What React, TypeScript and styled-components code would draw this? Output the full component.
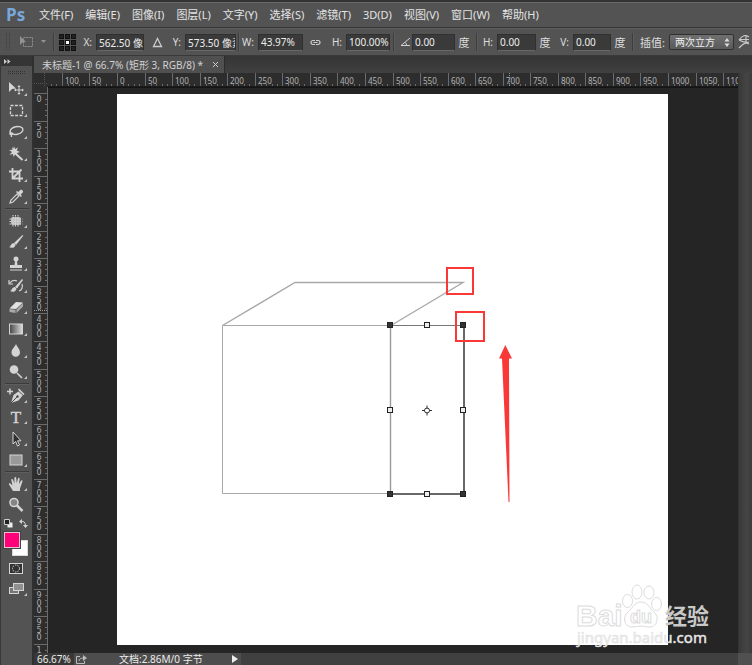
import React from "react";
import styled, { createGlobalStyle } from "styled-components";

const UI_FONT = '"Noto Sans", "Noto Sans CJK SC", sans-serif';

const GlobalStyle = createGlobalStyle`
  * { box-sizing: border-box; }
  body {
    margin: 0;
    background: #252525;
    font-family: ${UI_FONT};
    font-size: 10px;
    color: #dedede;
  }
  button, input, select { font: inherit; color: inherit; margin: 0; padding: 0; border: 0; background: none; }
`;

const Shell = styled.div`
  position: relative;
  display: flex;
  flex-direction: column;
  height: 100vh;
  overflow: hidden;
`;

const MenuBar = styled.nav`
  display: flex;
  flex: none;
  align-items: center;
  height: 28px;
  border-top: 2px solid #333;
  border-bottom: 1px solid #353535;
  box-shadow: inset 0 1px #686868;
  background: #535353;
`;

const Logo = styled.span`
  width: 33px;
  padding-left: 6px;
  font: bold 17px/24px "Open Sans", sans-serif;
  color: #78a7dc;
`;

const MenuItem = styled.button`
  flex: none;
  padding: 0 6px;
  font-size: 11px;
  line-height: 24px;
  white-space: nowrap;
  color: #e4e4e4;
`;

const OptionsBar = styled.form`
  display: grid;
  flex: none;
  grid-template-columns:
    16px 34px 8px 18px 20px 48px 26px 15px 51px 6px 16px 45px 25px 18px 44px 8px 14px
    43px 18px 8px 16px 39px 18px 19px 38px 18px 8px 32px 65px minmax(19px, 1fr);
  align-items: center;
  height: 28px;
  border-top: 1px solid #5f5f5f;
  border-bottom: 1px solid #393939;
  background: #535353;
  overflow: hidden;
`;

const FieldLabel = styled.label<{ $large?: boolean }>`
  padding-right: 4px;
  font-size: ${(p) => (p.$large ? 11 : 10)}px;
  text-align: right;
  white-space: nowrap;
`;

const Unit = styled.span`
  text-align: center;
  font-size: 11px;
`;

const NumberBox = styled.input`
  width: 100%;
  height: 17px;
  padding-left: 2px !important;
  border: 1px solid #303030 !important;
  border-bottom-color: #676767 !important;
  background: #3a3a3a !important;
  color: #ececec;
`;

const Divider = styled.i`
  justify-self: center;
  width: 2px;
  height: 18px;
  border-left: 1px solid #3d3d3d;
  border-right: 1px solid #5c5c5c;
`;

const IconCell = styled.span`
  display: flex;
  align-items: center;
  justify-content: center;
  gap: 6px;
`;

const SelectWrap = styled.span`
  display: flex;
  align-items: center;
  height: 16px;
  border: 1px solid #303030;
  border-radius: 2px;
  background: linear-gradient(#707070, #5b5b5b);
  padding-right: 3px;
`;

const MethodSelect = styled.select`
  flex: 1;
  min-width: 0;
  appearance: none;
  padding-left: 5px;
  line-height: 14px;
  color: #f0f0f0;
  option { color: #222; }
`;

const Body = styled.div`
  display: flex;
  flex: 1;
  min-height: 0;
  background: #303030;
`;

const ToolPanel = styled.aside`
  display: flex;
  flex-direction: column;
  flex: none;
  width: 32px;
  margin-right: 2px;
  border-left: 1px solid #383838;
  background: #535353;
`;

const PanelHead = styled.button`
  display: flex;
  align-items: center;
  height: 10px;
  padding-left: 3px;
  background: #353535;
`;

const GripRow = styled.div`
  display: flex;
  justify-content: center;
  align-items: center;
  height: 12px;
`;

const ToolGroup = styled.div<{ $height: number }>`
  display: grid;
  grid-auto-rows: 1fr;
  flex: none;
  height: ${(p) => p.$height}px;
`;

const ToolRule = styled.hr`
  width: 24px;
  height: 2px;
  margin: 0 auto;
  border: 0;
  border-top: 1px solid #3b3b3b;
  border-bottom: 1px solid #5e5e5e;
`;

const ToolButton = styled.button`
  display: flex;
  align-items: center;
  justify-content: center;
  width: 30px;
`;

const ColorSection = styled.div`
  display: flex;
  flex-direction: column;
  padding-left: 3px;
  height: 41px;
`;

const MiniRow = styled.div`
  display: flex;
  justify-content: space-between;
  width: 24px;
  height: 14px;
  margin-bottom: 2px;
`;

const MiniButton = styled.button`
  display: flex;
  align-items: center;
`;

const Swatches = styled.div`
  display: grid;
  grid-template-columns: 8px 8px 8px;
  grid-template-rows: 8px 8px 8px;
`;

const Swatch = styled.button<{ $color: string; $front?: boolean }>`
  grid-area: ${(p) => (p.$front ? "1 / 1 / 3 / 3" : "2 / 2 / 4 / 4")};
  z-index: ${(p) => (p.$front ? 1 : 0)};
  border: 1px solid ${(p) => (p.$front ? "#e6c5d2" : "#d8d8d8")} !important;
  outline: ${(p) => (p.$front ? "1px solid #444" : "none")};
  background: ${(p) => p.$color} !important;
`;

const DocumentPane = styled.main`
  display: flex;
  flex: 1;
  flex-direction: column;
  min-width: 0;
`;

const TabStrip = styled.div`
  display: flex;
  flex: none;
  height: 17px;
  background: linear-gradient(#353535, #404040);
`;

const DocumentTab = styled.div`
  display: flex;
  align-items: center;
  gap: 10px;
  padding: 0 6px 0 8px;
  border-right: 1px solid #2c2c2c;
  background: #505050;
  line-height: 16px;
  color: #d0d0d0;
  white-space: nowrap;
`;

const CloseButton = styled.button`
  display: flex;
`;

const DocumentGrid = styled.div`
  display: grid;
  flex: 1;
  min-height: 0;
  grid-template-columns: 14px minmax(0, 1fr) 14px;
  grid-template-rows: 14px minmax(0, 1fr);
`;

const RulerCell = styled.div`
  overflow: hidden;
  background: #2d2d2d;
  svg { display: block; }
`;

const CanvasArea = styled.div`
  overflow: hidden;
  padding: 6px 0 0 69px;
  background: #252525;
  border-top: 1px solid #151515;
  svg { display: block; }
`;

const VerticalScroll = styled.div`
  grid-row: 1 / 3;
  grid-column: 3;
  border-left: 1px solid #333;
  background: linear-gradient(90deg, #393939, #454545 60%, #3b3b3b);
`;

const StatusBar = styled.footer`
  display: flex;
  flex: none;
  height: 12px;
  line-height: 12px;
  background: #404040;
  color: #ececec;
`;

const Zoom = styled.input`
  width: 40px;
  padding-left: 3px !important;
  background: #383838 !important;
`;

const StatusInfo = styled.div`
  display: flex;
  align-items: center;
  width: 167px;
  padding: 0 3px 0 2px;
  background: #4d4d4d;
  white-space: nowrap;
`;

const StatusText = styled.span`
  flex: 1;
  padding-left: 32px;
`;

const ScrollCorner = styled.i`
  width: 14px;
  margin-left: auto;
  background: #505050;
`;

const Watermark = styled.svg`
  position: absolute;
  right: 36px;
  bottom: 13px;
  pointer-events: none;
`;

const menus = [
  "文件(F)", "编辑(E)", "图像(I)", "图层(L)", "文字(Y)", "选择(S)",
  "滤镜(T)", "3D(D)", "视图(V)", "窗口(W)", "帮助(H)",
];

const LIGHT = "#d4d4d4";

const line = { fill: "none", stroke: LIGHT, strokeWidth: 1.4 };

const drawings: Record<string, React.ReactNode> = {
  move: (
    <>
      <path d="M2 2v10l3-3 4-.5z" fill={LIGHT} />
      <path d="M12 6v8M8 10h8" stroke={LIGHT} />
      <path d="M12 5l-1.500 2h3zM12 15l-1.500-2h3zM7 10l2-1.500v3zM17 10l-2-1.500v3z" fill={LIGHT} />
    </>
  ),
  marquee: <rect x="3.500" y="4.500" width="12" height="10" {...line} strokeWidth={1.3} strokeDasharray="3 1.400" />,
  lasso: (
    <>
      <ellipse cx="9.500" cy="7.500" rx="6.500" ry="3.800" transform="rotate(-12 9.500 7.500)" {...line} />
      <path d="M4 9c-2 1-1 3 .5 2.500S6 10 5 10s-.5 3-.5 4" {...line} />
    </>
  ),
  wand: (
    <>
      <path d="M7 1l1 3 3-1.500L9.800 5.500 13 7l-3 1 .8 3L8 9.500 6.500 12 6 9l-3.500.8L5 7 2 5l3.500-.3L5 2l1.500 1.500z" fill={LIGHT} />
      <path d="M9 9l6.500 6" stroke={LIGHT} strokeWidth="2" />
    </>
  ),
  crop: <path d="M5.500 2v10.500H16M2 5.500h10.500V16M5.500 12.500l9-9" {...line} strokeWidth={1.8} />,
  dropper: (
    <>
      <path d="M3 15l1-3 6-6 2 2-6 6z" {...line} strokeWidth={1.2} />
      <path d="M9 4l5 5 .8-1-1-1.500 2-2c1-1.500-1-3.500-2.500-2.500l-2 2L10 3z" fill={LIGHT} />
    </>
  ),
  heal: (
    <>
      <rect x="4" y="5" width="10" height="8" rx="2" fill="#bebebe" />
      <path d="M6 3v12M8.500 3v12M11 3v12M2.500 7h13M2.500 9.500h13M2.500 12h13" stroke={LIGHT} strokeDasharray="1.500 1" />
    </>
  ),
  brush: (
    <>
      <path d="M7 10L15.500 2l.8.8L9 12z" fill={LIGHT} />
      <path d="M2 14c2 0 1.500-4 5-4l1.500 2C8 15 4 15.500 2 14z" fill={LIGHT} />
    </>
  ),
  stamp: (
    <>
      <circle cx="9" cy="4" r="2.500" fill={LIGHT} />
      <path d="M8 6h2l.5 4H15v3H3v-3h4.500z" fill={LIGHT} />
      <path d="M3 15h12" stroke={LIGHT} />
    </>
  ),
  history: (
    <>
      <path d="M8 10l7-8 1 1-6 8.500z" fill={LIGHT} />
      <path d="M3 14c2 0 1.500-4 5-4l1.500 2C8.500 15 5 15.500 3 14z" fill={LIGHT} />
      <path d="M3 6c2-3 5-3 7-2M2 3v4h4M15 7c1 3 0 6-3 7" {...line} strokeWidth={1.2} />
    </>
  ),
  eraser: (
    <>
      <path d="M2.500 10.500L9 4l7 .5-7 6.500z" fill="#e2e2e2" />
      <path d="M2.500 11l6 .7V15l-6-1zM9.500 11.500L16 5v3.500L9.500 15z" fill="#a9a9a9" />
    </>
  ),
  gradient: <rect x="2.500" y="4" width="13" height="10" fill="url(#ramp)" stroke={LIGHT} />,
  drop: <path d="M9 2c1 3 4 5 4 8.500a4.200 4.200 0 0 1-8.500 0C4.500 7 8 5 9 2z" fill={LIGHT} />,
  dodge: (
    <>
      <circle cx="7" cy="6.500" r="4.300" fill={LIGHT} />
      <path d="M10 10l5 5" stroke={LIGHT} strokeWidth="1.600" />
    </>
  ),
  pen: (
    <>
      <path d="M0 4.500h6M3 1.500v6" stroke={LIGHT} strokeWidth="1.500" />
      <path d="M4 16l2.500-8L12 4l4 4-4.500 5.500z" fill={LIGHT} />
      <path d="M4 16l6-6M11 3.500l6 5.500" stroke="#484848" />
      <path d="M12 1.500L17.500 7l-1 1.200-5.500-5.500z" fill={LIGHT} />
      <circle cx="10.500" cy="9.500" r="1.200" fill="#484848" />
    </>
  ),
  pointer: <path d="M6 2v12l2.700-2.500L10.500 16l2-1-2-4.200H14z" fill="#2f2f2f" stroke={LIGHT} />,
  shape: <rect x="3" y="4" width="12" height="10" fill="#999" stroke={LIGHT} />,
  hand: (
    <path
      d="M6 16L2 9.500c-.5-1 .8-1.600 1.600-.8L5.500 10.500 4.300 5c-.1-1.200 1.300-1.400 1.700-.3L7.500 8.500 7.400 3c0-1.200 1.700-1.200 1.800 0l.5 5.300L11 3.500c.3-1.100 1.700-.8 1.600.4L12 9l2-3.200c.6-1 1.800-.3 1.400.8L13 13.500V16z"
      fill={LIGHT}
    />
  ),
  zoom: (
    <>
      <circle cx="7" cy="6.500" r="4" fill="#858585" stroke={LIGHT} strokeWidth="1.600" />
      <path d="M10 9.500l5.500 5.500" stroke={LIGHT} strokeWidth="2.500" />
    </>
  ),
  mask: (
    <>
      <rect x="2.500" y="4.500" width="13" height="10" fill="#333" stroke={LIGHT} />
      <circle cx="9" cy="9.500" r="3.500" {...line} strokeWidth={1} strokeDasharray="1.500 1" />
    </>
  ),
  screen: (
    <>
      <rect x="2.500" y="7.500" width="9" height="6" fill="#777" stroke={LIGHT} />
      <rect x="6.500" y="3.500" width="10" height="7" fill="#909090" stroke={LIGHT} />
    </>
  ),
};

function ToolIcon({ name, flyout }: { name: string; flyout: boolean }) {
  return (
    <svg width="24" height="18" viewBox="-3 0 24 18" aria-hidden="true">
      <defs>
        <linearGradient id="ramp">
          <stop stopColor="#444" />
          <stop offset="1" stopColor="#ddd" />
        </linearGradient>
      </defs>
      {name === "type" ? (
        <text x="9" y="15" textAnchor="middle" fontFamily="Liberation Serif, serif" fontSize="17" fill={LIGHT} stroke={LIGHT} strokeWidth="0.400">T</text>
      ) : (
        drawings[name]
      )}
      {flyout && <path d="M20 13v3h-3z" fill="#c4c4c4" />}
    </svg>
  );
}

const toolGroups = [
  { height: 130, tools: [["move", "移动"], ["marquee", "矩形选框"], ["lasso", "套索"], ["wand", "魔棒"], ["crop", "裁剪"], ["dropper", "吸管"]] },
  { height: 173, tools: [["heal", "修复画笔"], ["brush", "画笔"], ["stamp", "仿制图章"], ["history", "历史记录画笔"], ["eraser", "橡皮擦"], ["gradient", "渐变"], ["drop", "模糊"], ["dodge", "减淡"]] },
  { height: 86, tools: [["pen", "钢笔"], ["type", "文字"], ["pointer", "路径选择"], ["shape", "矩形"]] },
  { height: 43, tools: [["hand", "抓手"], ["zoom", "缩放"]] },
];

// Fifty document units at the current zoom level, in screen pixels.
const STEP = 551 / 20;

function HorizontalRuler() {
  const origin = 69;
  const marks = Array.from({ length: 25 }, (_, i) => i - 2);
  return (
    <svg width="700" height="14" aria-label="水平标尺">
      {marks.map((n) => {
        const x = Math.round(origin + n * STEP);
        return (
          <g key={n}>
            <path d={`M${x + 0.5} 0V14`} stroke="#6b6b6b" />
            {[1, 2, 3, 4].map((k) => (
              <path key={k} d={`M${Math.round(x + (k * STEP) / 5) + 0.5} 11V14`} stroke="#6b6b6b" />
            ))}
            <text x={x + 3} y="11" fontSize="8" fill="#b4b4b4">{Math.abs(n * 50)}</text>
          </g>
        );
      })}
      <path d="M3.500 11V14M8.500 11V14" stroke="#6b6b6b" />
      <path d="M461.500 0V14" stroke="#8c8cad" strokeDasharray="1 1" />
      <path d="M0 13.500H700" stroke="#191919" />
    </svg>
  );
}

function VerticalRuler() {
  const origin = 6;
  const marks = Array.from({ length: 21 }, (_, i) => i);
  const rows = [9, 17, 24];
  return (
    <svg width="14" height="1660" aria-label="垂直标尺">
      {marks.map((n) => {
        const y = Math.round(origin + n * STEP);
        const digits = n === 20 ? ["1"] : String(n * 50).split("");
        return (
          <g key={n}>
            <path d={`M0 ${y + 0.5}H14`} stroke="#6b6b6b" />
            {[1, 2, 3, 4].map((k) => (
              <path key={k} d={`M11 ${Math.round(y + (k * STEP) / 5) + 0.5}H14`} stroke="#6b6b6b" />
            ))}
            {digits.map((digit, i) => (
              <text key={i} x="5" y={y + rows[i]} textAnchor="middle" fontFamily="DejaVu Sans, sans-serif" fontSize="8" fill="#aeaeae">{digit}</text>
            ))}
          </g>
        );
      })}
      <path d="M0 223.500H14" stroke="#999" strokeDasharray="1 1" />
      <path d="M13.500 0V1660" stroke="#6b6b6b" />
    </svg>
  );
}

function Artwork() {
  const handles = [
    [390, 325, 1], [427, 325, 0], [463, 325, 1],
    [390, 410, 0], [463, 410, 0],
    [390, 494, 1], [427, 494, 0], [463, 494, 1],
  ];
  return (
    <svg width="551" height="551" viewBox="117 94 551 551" role="img" aria-label="画布">
      <path d="M117 94h551v551H117z" fill="#fff" />
      <g fill="none" stroke="#a9a9a9" strokeWidth="1.400">
        <path d="M222.500 325.500L295 282.500H463L391 325.500" />
        <path d="M390 325.500H222.500V493.500H390" strokeWidth="1" />
        <path d="M390.500 325V494" stroke="#999" />
      </g>
      <path d="M390 325.500H464" stroke="#777" />
      <path d="M464 325V494H390" fill="none" stroke="#686868" strokeWidth="2" />
      {handles.map(([x, y, solid]) => (
        <rect
          key={`${x}-${y}`}
          x={x - 2.5}
          y={y - 2.5}
          width="5"
          height="5"
          fill={solid ? "#333" : "#eee"}
          stroke="#222"
        />
      ))}
      <circle cx="427" cy="410.500" r="2.500" fill="none" stroke="#333" />
      <path d="M427 405.500v3M427 412.500v3M422 410.500h3M429 410.500h3" stroke="#333" />
      <g fill="none" stroke="#fa3838" strokeWidth="2">
        <rect x="447" y="268" width="26" height="26" />
        <rect x="456" y="312" width="28" height="29" />
      </g>
      <path d="M505.300 345L512 358.500H509L509.500 502H508.500L502 358.500H499z" fill="#fa3838" />
    </svg>
  );
}

export default function App() {
  return (
    <Shell>
      <GlobalStyle />
      <MenuBar>
        <Logo>Ps</Logo>
        {menus.map((label) => <MenuItem key={label}>{label}</MenuItem>)}
      </MenuBar>

      <OptionsBar>
        <IconCell>
          <svg width="6" height="18"><path d="M1.500 0V18M4.500 0V18" stroke="#3c3c3c" strokeDasharray="1 1" /></svg>
        </IconCell>
        <IconCell>
          <svg width="16" height="14">
            <rect x="4.500" y="2.500" width="9" height="9" fill="none" stroke="#929292" strokeDasharray="2 1" />
            <path d="M1 1v9l2.500-2.500L7 7z" fill="#929292" />
          </svg>
          <svg width="6" height="4"><path d="M0 0h5L2.500 3z" fill="#929292" /></svg>
        </IconCell>
        <Divider />
        <IconCell>
          <svg width="17" height="17">
            <path d="M4 2.500h9M4 8.500h9M4 14.500h9M2.500 4v9M8.500 4v9M14.500 4v9" stroke="#aaa" strokeDasharray="1 1" />
            {[2, 8, 14].map((y) => [2, 8, 14].map((x) => (
              <rect key={`${x}-${y}`} x={x - 1.5} y={y - 1.5} width="4" height="4" fill={x === 8 && y === 8 ? "#fff" : "#222"} stroke="#111" />
            )))}
          </svg>
        </IconCell>
        <FieldLabel htmlFor="x">X:</FieldLabel>
        <NumberBox id="x" defaultValue="562.50 像素" />
        <IconCell>
          <svg width="11" height="11"><path d="M5.500 1.500L9.500 9.500H1.500z" fill="none" stroke="#ccc" strokeWidth="1.300" /></svg>
        </IconCell>
        <FieldLabel htmlFor="y">Y:</FieldLabel>
        <NumberBox id="y" defaultValue="573.50 像素" />
        <Divider />
        <FieldLabel htmlFor="w">W:</FieldLabel>
        <NumberBox id="w" defaultValue="43.97%" />
        <IconCell>
          <svg width="11" height="7" fill="none" stroke="#d0d0d0" strokeWidth="1.200">
            <path d="M5 1.500H3a2 2 0 0 0 0 4H5M6 1.500H8a2 2 0 0 1 0 4H6M3.500 3.500h4" />
          </svg>
        </IconCell>
        <FieldLabel htmlFor="h">H:</FieldLabel>
        <NumberBox id="h" defaultValue="100.00%" />
        <Divider />
        <IconCell>
          <svg width="11" height="10" fill="none" stroke="#d0d0d0"><path d="M10 1L1 8.500H10M5 5.500q2 1 1.500 3" /></svg>
        </IconCell>
        <NumberBox aria-label="旋转" defaultValue="0.00" />
        <Unit>度</Unit>
        <Divider />
        <FieldLabel htmlFor="skew-h">H:</FieldLabel>
        <NumberBox id="skew-h" defaultValue="0.00" />
        <Unit>度</Unit>
        <FieldLabel htmlFor="skew-v">V:</FieldLabel>
        <NumberBox id="skew-v" defaultValue="0.00" />
        <Unit>度</Unit>
        <Divider />
        <FieldLabel htmlFor="method" $large>插值:</FieldLabel>
        <SelectWrap>
          <MethodSelect id="method"><option>两次立方</option></MethodSelect>
          <svg width="6" height="9"><path d="M3 0l2.500 3.500h-5zM3 9L.5 5.500h5z" fill="#ddd" /></svg>
        </SelectWrap>
        <IconCell>
          <svg width="11" height="15" fill="none" stroke="#c8c8c8" strokeWidth="1.200">
            <path d="M1 5q5-7 10-3M1 5q5 3 10 2M2 4.500h9M8 1v6M1 13q6-7 10-4" />
          </svg>
        </IconCell>
      </OptionsBar>

      <Body>
        <ToolPanel aria-label="工具">
          <PanelHead aria-label="展开面板">
            <svg width="7" height="5"><path d="M0 0l3 2.500L0 5zM3.500 0l3 2.500-3 2.500z" fill="#ccc" /></svg>
          </PanelHead>
          <GripRow>
            <svg width="17" height="4"><path d="M0 1.500H17M0 3.500H17" stroke="#333" strokeDasharray="1 1" /></svg>
          </GripRow>
          {toolGroups.map((group, index) => (
            <React.Fragment key={group.height}>
              {index > 0 && <ToolRule />}
              <ToolGroup $height={group.height}>
                {group.tools.map(([name, label]) => (
                  <ToolButton key={name} aria-label={label}>
                    <ToolIcon name={name} flyout={name !== "zoom"} />
                  </ToolButton>
                ))}
              </ToolGroup>
            </React.Fragment>
          ))}
          <ColorSection>
            <MiniRow>
              <MiniButton aria-label="默认颜色">
                <svg width="9" height="9"><path d="M3.500 3.500h5v5h-5z" fill="#eee" /><path d="M.5.5h5v5h-5z" fill="#222" stroke="#ccc" /></svg>
              </MiniButton>
              <MiniButton aria-label="切换颜色">
                <svg width="9" height="9"><path d="M2 2.500q4-1 4.500 4" fill="none" stroke={LIGHT} /><path d="M0 2.500L3 0v5zM4 6h5L6.500 9z" fill={LIGHT} /></svg>
              </MiniButton>
            </MiniRow>
            <Swatches>
              <Swatch $color="#ff0078" $front aria-label="前景色" />
              <Swatch $color="#ffffff" aria-label="背景色" />
            </Swatches>
          </ColorSection>
          <ToolGroup $height={43}>
            <ToolButton aria-label="快速蒙版"><ToolIcon name="mask" flyout={false} /></ToolButton>
            <ToolButton aria-label="屏幕模式"><ToolIcon name="screen" flyout /></ToolButton>
          </ToolGroup>
        </ToolPanel>

        <DocumentPane>
          <TabStrip>
            <DocumentTab>
              未标题-1 @ 66.7% (矩形 3, RGB/8) *
              <CloseButton aria-label="关闭">
                <svg width="5" height="5"><path d="M0 0l5 5M5 0L0 5" stroke="#ccc" /></svg>
              </CloseButton>
            </DocumentTab>
          </TabStrip>
          <DocumentGrid>
            <RulerCell>
              <svg width="14" height="14"><path d="M0 10.500H14M10.500 0V14" stroke="#555" strokeDasharray="1 1" /></svg>
            </RulerCell>
            <RulerCell><HorizontalRuler /></RulerCell>
            <VerticalScroll />
            <RulerCell><VerticalRuler /></RulerCell>
            <CanvasArea><Artwork /></CanvasArea>
          </DocumentGrid>
          <StatusBar>
            <Zoom aria-label="缩放比例" defaultValue="66.67%" />
            <StatusInfo>
              <svg width="11" height="9" fill="none" stroke="#bbb"><path d="M4 1.500H.5v7h8V6M3 6q0-3 5-3" /><path d="M7 0l4 3-4 3z" fill="#bbb" stroke="none" /></svg>
              <StatusText>文档:2.86M/0 字节</StatusText>
              <svg width="6" height="8"><path d="M0 0l6 4-6 4z" fill="#eee" /></svg>
            </StatusInfo>
            <ScrollCorner />
          </StatusBar>
        </DocumentPane>
      </Body>

      <Watermark width="144" height="72" viewBox="572 580 144 72" aria-label="Baidu 经验">
        <g fill="#fff" stroke="#dcdcdc" strokeWidth="1">
          <text x="576" y="626" fontFamily="Liberation Sans, sans-serif" fontSize="30" fontWeight="bold">Bai</text>
          <path d="M641 602c7 0 8 6 13 10 6 5 3 15-4 15-4 0-6-1-9-1s-6 1-9 1c-8 0-10-10-4-15 5-4 6-10 13-10z" />
          <ellipse cx="637" cy="592" rx="5" ry="7" />
          <ellipse cx="649" cy="592.500" rx="5" ry="6.500" />
          <ellipse cx="627.500" cy="601" rx="5" ry="6.500" />
          <ellipse cx="656.500" cy="604" rx="5" ry="6.500" />
          <text x="630" y="623" fontFamily="Liberation Sans, sans-serif" fontSize="18" fontWeight="bold">du</text>
        </g>
        <text x="665" y="624" fontFamily="Noto Sans CJK SC, sans-serif" fontSize="22" fontWeight="bold" fill="#c9c9c9">经验</text>
        <text x="577" y="643" fontFamily="Noto Sans, sans-serif" fontSize="15" fill="#efefef" stroke="#dedede" strokeWidth="0.500">jingyan.baidu.com</text>
      </Watermark>
    </Shell>
  );
}
